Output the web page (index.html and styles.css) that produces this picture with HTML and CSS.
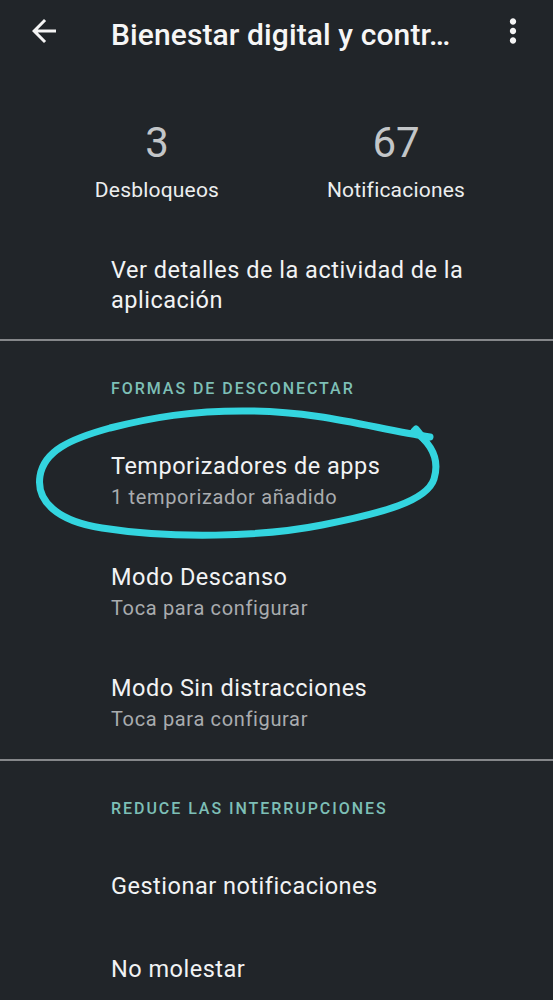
FILE: index.html
```html
<!DOCTYPE html>
<html lang="es">
<head>
<meta charset="utf-8">
<title>Bienestar digital y controles parentales</title>
<link rel="stylesheet" href="styles.css">
</head>
<body>
<div class="screen">
  <header class="toolbar">
    <svg class="icon back" viewBox="0 0 24 24" aria-hidden="true"><path d="M20 11H7.83l5.59-5.59L12 4l-8 8 8 8 1.41-1.41L7.83 13H20v-2z"/></svg>
    <h1 class="toolbar-title">Bienestar digital y contr…</h1>
    <svg class="icon more" viewBox="0 0 24 24" aria-hidden="true"><path d="M12 8c1.1 0 2-.9 2-2s-.9-2-2-2-2 .9-2 2 .9 2 2 2zm0 2c-1.1 0-2 .9-2 2s.9 2 2 2 2-.9 2-2-.9-2-2-2zm0 6c-1.1 0-2 .9-2 2s.9 2 2 2 2-.9 2-2-.9-2-2-2z"/></svg>
  </header>

  <section class="stats">
    <div class="stat">
      <div class="stat-value">3</div>
      <div class="stat-label">Desbloqueos</div>
    </div>
    <div class="stat">
      <div class="stat-value">67</div>
      <div class="stat-label">Notificaciones</div>
    </div>
  </section>

  <div class="pref pref-details">
    <div class="pref-title">Ver detalles de la actividad de la aplicación</div>
  </div>

  <div class="divider"></div>

  <section class="group">
    <div class="group-title">Formas de desconectar</div>
    <div class="pref">
      <div class="pref-title">Temporizadores de apps</div>
      <div class="pref-summary">1 temporizador añadido</div>
    </div>
    <div class="pref">
      <div class="pref-title">Modo Descanso</div>
      <div class="pref-summary">Toca para configurar</div>
    </div>
    <div class="pref">
      <div class="pref-title">Modo Sin distracciones</div>
      <div class="pref-summary">Toca para configurar</div>
    </div>
  </section>

  <div class="divider"></div>

  <section class="group">
    <div class="group-title">Reduce las interrupciones</div>
    <div class="pref pref-single">
      <div class="pref-title">Gestionar notificaciones</div>
    </div>
    <div class="pref pref-single">
      <div class="pref-title">No molestar</div>
    </div>
  </section>

  <svg class="scribble" viewBox="0 0 553 1000" aria-hidden="true">
    <path d="M414 431 C428 441 441 456 434 479 C427 501 383 513 322 525 C262 537 172 539 102 528 C57 521 36 501 40 476 C44 451 70 439 110 428 C150 418 192 410 252 411 C322 412 372 428 430 437" />
    <path d="M416 429 L424 439" />
  </svg>
</div>
</body>
</html>
```

FILE: styles.css
```css
* { box-sizing: border-box; }

html, body {
  margin: 0;
  padding: 0;
  background: #212529;
}

body {
  font-family: Roboto, "Noto Sans", "Liberation Sans", sans-serif;
  color: #eef0f1;
}

.screen {
  position: relative;
  width: 553px;
  height: 1000px;
  overflow: hidden;
  background: #212529;
}

/* Toolbar */
.toolbar {
  display: flex;
  align-items: center;
  height: 68px;
  padding: 0 21px 7px 26px;
}

.icon {
  fill: #f4f4f4;
  flex: none;
}

.back {
  width: 36px;
  height: 36px;
}

.more {
  width: 38px;
  height: 38px;
}

.toolbar-title {
  flex: 1;
  margin: 8px 0 0 49px;
  font-size: 30px;
  font-weight: 500;
  line-height: 34px;
  letter-spacing: 0.1px;
  color: #f6f6f6;
  white-space: nowrap;
}

/* Stats */
.stats {
  display: grid;
  grid-template-columns: 239px 239px;
  justify-content: center;
  padding-top: 50px;
}

.stat {
  text-align: center;
}

.stat-value {
  font-size: 42px;
  line-height: 49px;
  color: #c3c6c8;
}

.stat-label {
  margin-top: 11px;
  font-size: 21px;
  line-height: 24px;
  letter-spacing: 0.2px;
  color: #eceeef;
}

/* Preferences */
.pref {
  padding: 25px 40px 24px 111px;
}

.pref-details {
  padding-top: 53px;
  padding-bottom: 24px;
}

.pref-single {
  padding-bottom: 28px;
}

.pref-title {
  font-size: 23.5px;
  line-height: 30px;
  letter-spacing: 0.5px;
  color: #f2f3f4;
}

.pref-summary {
  font-size: 20px;
  line-height: 32px;
  letter-spacing: 0.65px;
  color: #a9acaf;
}

.divider {
  height: 2px;
  background: #85878a;
}

.group-title {
  padding: 37.5px 20px 27.5px 111px;
  font-size: 16px;
  line-height: 20px;
  font-weight: 500;
  letter-spacing: 1.95px;
  text-transform: uppercase;
  color: #7dbfb6;
}

/* Hand-drawn annotation over the list */
.scribble {
  position: absolute;
  left: 0;
  top: 0;
  width: 553px;
  height: 1000px;
  fill: none;
  stroke: #33d5df;
  stroke-width: 7;
  stroke-linecap: round;
  stroke-linejoin: round;
  pointer-events: none;
}
```
